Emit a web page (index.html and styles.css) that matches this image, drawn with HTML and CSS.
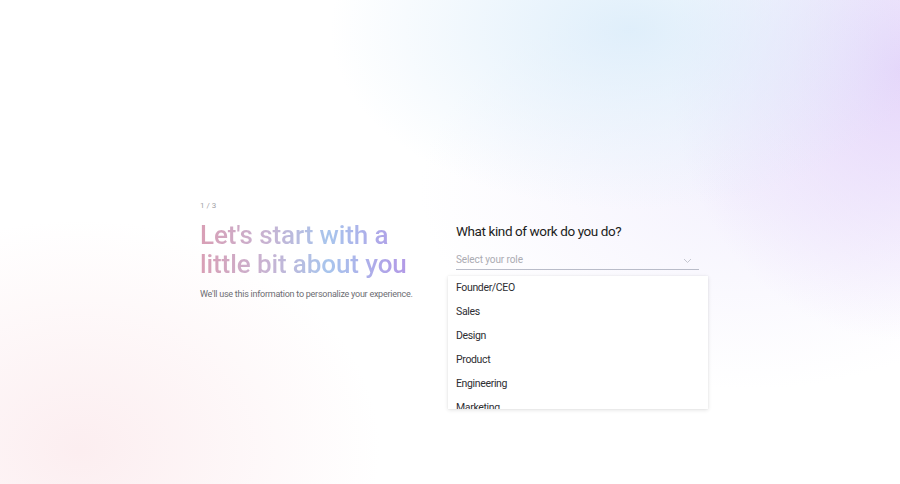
FILE: index.html
```html
<!DOCTYPE html>
<html lang="en">
<head>
<meta charset="utf-8">
<title>Onboarding</title>
<link rel="stylesheet" href="styles.css">
</head>
<body>
<div class="page">
  <div class="bg"></div>
  <main class="content">
    <section class="intro">
      <div class="step">1 / 3</div>
      <h1 class="title">Let's start with a<br>little bit about you</h1>
      <p class="lead">We'll use this information to personalize your experience.</p>
    </section>
    <section class="form">
      <h2 class="question">What kind of work do you do?</h2>
      <div class="select">
        <span class="placeholder">Select your role</span>
        <svg class="chevron" width="9" height="6" viewBox="0 0 9 6"><path d="M1 1l3.5 3.5L8 1" fill="none" stroke="#c5c7d0" stroke-width="1"/></svg>
      </div>
      <ul class="menu">
        <li>Founder/CEO</li>
        <li>Sales</li>
        <li>Design</li>
        <li>Product</li>
        <li>Engineering</li>
        <li>Marketing</li>
      </ul>
    </section>
  </main>
</div>
</body>
</html>
```
FILE: styles.css
```css
* { box-sizing: border-box; }
html, body { margin: 0; padding: 0; }
body {
  font-family: "Roboto", "Liberation Sans", sans-serif;
  background: #ffffff;
}
.page {
  position: relative;
  width: 900px;
  height: 484px;
  overflow: hidden;
  background: #fff;
}
.bg {
  position: absolute;
  inset: 0;
  background:
    radial-gradient(ellipse 300px 180px at 630px 30px, rgba(218,236,250,0.85), rgba(218,236,250,0) 100%),
    radial-gradient(ellipse 230px 270px at 900px 70px, rgba(228,212,250,0.95), rgba(228,212,250,0) 100%),
    radial-gradient(ellipse 320px 200px at 740px 190px, rgba(236,232,252,0.55), rgba(236,232,252,0) 100%),
    radial-gradient(ellipse 300px 230px at 80px 450px, rgba(251,232,235,0.75), rgba(251,232,235,0) 100%);
}
.content {
  position: relative;
  display: flex;
  padding: 201px 0 0 200px;
}
.intro {
  width: 248px;
}
.step {
  font-size: 8px;
  line-height: 10px;
  color: #a3a3a8;
}
.title {
  margin: 10px 0 0;
  display: inline-block;
  font-size: 26px;
  line-height: 29px;
  font-weight: 500;
  letter-spacing: -0.1px;
  background: linear-gradient(90deg, #d99fb5 0%, #c8b3d2 32%, #a8c5ed 62%, #b299e6 100%);
  -webkit-background-clip: text;
  background-clip: text;
  color: transparent;
}
.lead {
  margin: 9px 0 0;
  font-size: 9px;
  line-height: 12px;
  color: #6d6d73;
  letter-spacing: -0.25px;
}
.form {
  width: 260px;
  padding-top: 20px;
}
.question {
  margin: 0 0 0 8px;
  font-size: 13.5px;
  line-height: 20px;
  font-weight: 400;
  color: #1d1d22;
  letter-spacing: -0.4px;
}
.select {
  margin: 9px 9px 0 8px;
  height: 20px;
  border-bottom: 1px solid #b9bcc9;
  display: flex;
  align-items: center;
  justify-content: space-between;
  padding-bottom: 1px;
}
.placeholder {
  font-size: 10px;
  color: #ababb2;
  letter-spacing: -0.1px;
}
.chevron { margin-right: 7px; margin-top: 3px; }
.menu {
  list-style: none;
  margin: 6px 0 0;
  padding: 0;
  height: 133px;
  overflow: hidden;
  background: #fff;
  box-shadow: 0 1px 4px rgba(0,0,0,0.12), 0 0 1px rgba(0,0,0,0.08);
}
.menu li {
  height: 24px;
  line-height: 24px;
  padding-left: 8px;
  font-size: 10.5px;
  color: #2e2e33;
  letter-spacing: -0.35px;
}
```
